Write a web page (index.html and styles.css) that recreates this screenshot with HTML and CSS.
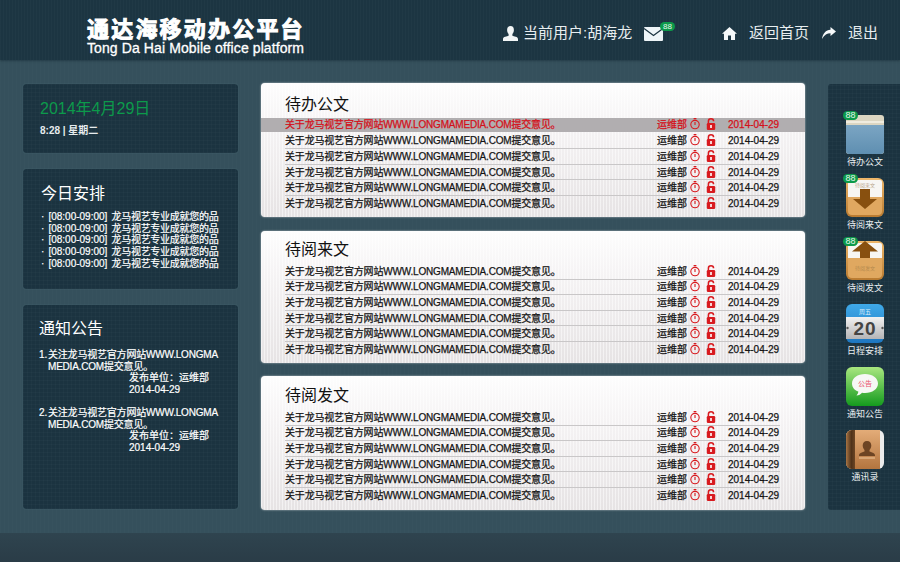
FILE: index.html
```html
<!DOCTYPE html>
<html lang="zh-CN">
<head>
    <meta charset="UTF-8">
    <meta name="viewport" content="width=device-width, initial-scale=1.0">
    <title>通达海移动办公平台</title>
    <link rel="stylesheet" href="styles.css">
</head>
<body>
    <svg class="defs" width="0" height="0">
        <symbol id="clock" viewBox="0 0 10 12">
            <rect x="3.6" y="0" width="2.8" height="1.3" fill="#d81a1f"/>
            <circle cx="5" cy="6.6" r="4.2" fill="none" stroke="#d81a1f" stroke-width="1.1"/>
            <path d="M5 3.9V7" stroke="#d81a1f" stroke-width="1.1"/>
        </symbol>
        <symbol id="lock" viewBox="0 0 10 12">
            <path d="M2.4 5V3.2a2.6 2.4 0 0 1 5.2 0" fill="none" stroke="#d81a1f" stroke-width="1.5"/>
            <rect x="0.8" y="5" width="8.4" height="7" rx="1.2" fill="#d81a1f"/>
            <rect x="4.2" y="7" width="1.6" height="3" fill="#fff"/>
        </symbol>
    </svg>

    <header class="topbar">
        <div class="brand">
            <div class="brand-cn">通达海移动办公平台</div>
            <div class="brand-en">Tong Da Hai Mobile office platform</div>
        </div>
        <div class="user">
            <svg class="top-icon" width="15" height="15" viewBox="0 0 15 15"><path d="M7.5 0c2.300 0 3.400 1.700 3.400 3.900 0 1.600-.7 3.100-1.500 4v1.800c1.500.6 5.600.8 5.600 3.300v2H0v-2c0-2.500 4.100-2.700 5.600-3.300V7.900C4.800 7 4.100 5.500 4.100 3.900 4.100 1.700 5.200 0 7.500 0z" fill="#f2f6f7"/></svg>
            <span>当前用户:胡海龙</span>
        </div>
        <div class="mail">
            <svg width="19" height="14" viewBox="0 0 19 14"><rect width="19" height="14" rx="1" fill="#eef5f8"/><path d="M0 1.500l9.500 7 9.500-7" fill="none" stroke="#1c3441" stroke-width="1.300"/></svg>
            <span class="badge mail-badge">88</span>
        </div>
        <nav class="toplinks">
            <svg class="top-icon" width="15" height="13" viewBox="0 0 15 13"><path d="M7.500 0L15 6.800h-2V13H9V8.500H6V13H2V6.800H0z" fill="#f5f8f9"/></svg>
            <a class="toplink">返回首页</a>
            <svg class="top-icon exit-icon" width="14" height="12" viewBox="0 0 14 12"><path d="M8.500 0L14 4.500 8.500 9V6.300C5 6.300 2.500 8 0 12 .8 6.500 3.800 3 8.500 2.700z" fill="#f5f8f9"/></svg>
            <a class="toplink">退出</a>
        </nav>
    </header>

    <div class="layout">
        <aside class="side">
            <section class="dark-box date-box">
                <div class="date-big">2014年4月29日</div>
                <div class="date-small">8:28 | 星期二</div>
            </section>
            <section class="dark-box plan-box">
                <h2>今日安排</h2>
                <ul class="plan-list">
                    <li>· [08:00-09:00] <span class="plan-text">龙马视艺专业成就您的品</span></li>
                    <li>· [08:00-09:00] <span class="plan-text">龙马视艺专业成就您的品</span></li>
                    <li>· [08:00-09:00] <span class="plan-text">龙马视艺专业成就您的品</span></li>
                    <li>· [08:00-09:00] <span class="plan-text">龙马视艺专业成就您的品</span></li>
                    <li>· [08:00-09:00] <span class="plan-text">龙马视艺专业成就您的品</span></li>
                </ul>
            </section>
            <section class="dark-box notice-box">
                <h2>通知公告</h2>
                <div class="notice">
                    <span class="notice-num">1.</span>
                    <p>关注龙马视艺官方网站WWW.LONGMAMEDIA.COM提交意见。</p>
                    <div class="notice-meta">发布单位：运维部<br>2014-04-29</div>
                </div>
                <div class="notice">
                    <span class="notice-num">2.</span>
                    <p>关注龙马视艺官方网站WWW.LONGMAMEDIA.COM提交意见。</p>
                    <div class="notice-meta">发布单位：运维部<br>2014-04-29</div>
                </div>
            </section>
        </aside>

        <main class="content">
            <section class="doc-panel panel-todo">
                <h2>待办公文</h2>
                <div class="doc-row active"><span class="doc-title">关于龙马视艺官方网站WWW.LONGMAMEDIA.COM提交意见。</span><span class="doc-dept">运维部</span><svg class="i-clock"><use href="#clock"/></svg><svg class="i-lock"><use href="#lock"/></svg><span class="doc-date">2014-04-29</span></div>
                <div class="doc-row"><span class="doc-title">关于龙马视艺官方网站WWW.LONGMAMEDIA.COM提交意见。</span><span class="doc-dept">运维部</span><svg class="i-clock"><use href="#clock"/></svg><svg class="i-lock"><use href="#lock"/></svg><span class="doc-date">2014-04-29</span></div>
                <div class="doc-row"><span class="doc-title">关于龙马视艺官方网站WWW.LONGMAMEDIA.COM提交意见。</span><span class="doc-dept">运维部</span><svg class="i-clock"><use href="#clock"/></svg><svg class="i-lock"><use href="#lock"/></svg><span class="doc-date">2014-04-29</span></div>
                <div class="doc-row"><span class="doc-title">关于龙马视艺官方网站WWW.LONGMAMEDIA.COM提交意见。</span><span class="doc-dept">运维部</span><svg class="i-clock"><use href="#clock"/></svg><svg class="i-lock"><use href="#lock"/></svg><span class="doc-date">2014-04-29</span></div>
                <div class="doc-row"><span class="doc-title">关于龙马视艺官方网站WWW.LONGMAMEDIA.COM提交意见。</span><span class="doc-dept">运维部</span><svg class="i-clock"><use href="#clock"/></svg><svg class="i-lock"><use href="#lock"/></svg><span class="doc-date">2014-04-29</span></div>
                <div class="doc-row"><span class="doc-title">关于龙马视艺官方网站WWW.LONGMAMEDIA.COM提交意见。</span><span class="doc-dept">运维部</span><svg class="i-clock"><use href="#clock"/></svg><svg class="i-lock"><use href="#lock"/></svg><span class="doc-date">2014-04-29</span></div>
            </section>
            <section class="doc-panel panel-in">
                <h2>待阅来文</h2>
                <div class="doc-row"><span class="doc-title">关于龙马视艺官方网站WWW.LONGMAMEDIA.COM提交意见。</span><span class="doc-dept">运维部</span><svg class="i-clock"><use href="#clock"/></svg><svg class="i-lock"><use href="#lock"/></svg><span class="doc-date">2014-04-29</span></div>
                <div class="doc-row"><span class="doc-title">关于龙马视艺官方网站WWW.LONGMAMEDIA.COM提交意见。</span><span class="doc-dept">运维部</span><svg class="i-clock"><use href="#clock"/></svg><svg class="i-lock"><use href="#lock"/></svg><span class="doc-date">2014-04-29</span></div>
                <div class="doc-row"><span class="doc-title">关于龙马视艺官方网站WWW.LONGMAMEDIA.COM提交意见。</span><span class="doc-dept">运维部</span><svg class="i-clock"><use href="#clock"/></svg><svg class="i-lock"><use href="#lock"/></svg><span class="doc-date">2014-04-29</span></div>
                <div class="doc-row"><span class="doc-title">关于龙马视艺官方网站WWW.LONGMAMEDIA.COM提交意见。</span><span class="doc-dept">运维部</span><svg class="i-clock"><use href="#clock"/></svg><svg class="i-lock"><use href="#lock"/></svg><span class="doc-date">2014-04-29</span></div>
                <div class="doc-row"><span class="doc-title">关于龙马视艺官方网站WWW.LONGMAMEDIA.COM提交意见。</span><span class="doc-dept">运维部</span><svg class="i-clock"><use href="#clock"/></svg><svg class="i-lock"><use href="#lock"/></svg><span class="doc-date">2014-04-29</span></div>
                <div class="doc-row"><span class="doc-title">关于龙马视艺官方网站WWW.LONGMAMEDIA.COM提交意见。</span><span class="doc-dept">运维部</span><svg class="i-clock"><use href="#clock"/></svg><svg class="i-lock"><use href="#lock"/></svg><span class="doc-date">2014-04-29</span></div>
            </section>
            <section class="doc-panel panel-out">
                <h2>待阅发文</h2>
                <div class="doc-row"><span class="doc-title">关于龙马视艺官方网站WWW.LONGMAMEDIA.COM提交意见。</span><span class="doc-dept">运维部</span><svg class="i-clock"><use href="#clock"/></svg><svg class="i-lock"><use href="#lock"/></svg><span class="doc-date">2014-04-29</span></div>
                <div class="doc-row"><span class="doc-title">关于龙马视艺官方网站WWW.LONGMAMEDIA.COM提交意见。</span><span class="doc-dept">运维部</span><svg class="i-clock"><use href="#clock"/></svg><svg class="i-lock"><use href="#lock"/></svg><span class="doc-date">2014-04-29</span></div>
                <div class="doc-row"><span class="doc-title">关于龙马视艺官方网站WWW.LONGMAMEDIA.COM提交意见。</span><span class="doc-dept">运维部</span><svg class="i-clock"><use href="#clock"/></svg><svg class="i-lock"><use href="#lock"/></svg><span class="doc-date">2014-04-29</span></div>
                <div class="doc-row"><span class="doc-title">关于龙马视艺官方网站WWW.LONGMAMEDIA.COM提交意见。</span><span class="doc-dept">运维部</span><svg class="i-clock"><use href="#clock"/></svg><svg class="i-lock"><use href="#lock"/></svg><span class="doc-date">2014-04-29</span></div>
                <div class="doc-row"><span class="doc-title">关于龙马视艺官方网站WWW.LONGMAMEDIA.COM提交意见。</span><span class="doc-dept">运维部</span><svg class="i-clock"><use href="#clock"/></svg><svg class="i-lock"><use href="#lock"/></svg><span class="doc-date">2014-04-29</span></div>
                <div class="doc-row"><span class="doc-title">关于龙马视艺官方网站WWW.LONGMAMEDIA.COM提交意见。</span><span class="doc-dept">运维部</span><svg class="i-clock"><use href="#clock"/></svg><svg class="i-lock"><use href="#lock"/></svg><span class="doc-date">2014-04-29</span></div>
            </section>
        </main>

        <aside class="dock">
            <a class="dock-item">
                <span class="badge dock-badge">88</span>
                <svg class="dock-icon" viewBox="0 0 38 39">
                    <defs><linearGradient id="blue" x1="0" y1="0" x2="0" y2="1"><stop offset="0" stop-color="#7ba5c3"/><stop offset="1" stop-color="#5f8fb1"/></linearGradient></defs>
                    <rect width="38" height="39" rx="3" fill="#dcd6c2"/>
                    <rect y="6" width="38" height="2" fill="#f0ecdf"/>
                    <path d="M0 10h38v26a3 3 0 0 1-3 3H3a3 3 0 0 1-3-3z" fill="url(#blue)"/>
                </svg>
                <span class="dock-label">待办公文</span>
            </a>
            <a class="dock-item">
                <span class="badge dock-badge">88</span>
                <svg class="dock-icon" viewBox="0 0 38 39">
                    <defs><linearGradient id="box" x1="0" y1="0" x2="0" y2="1"><stop offset="0" stop-color="#eeb76a"/><stop offset="1" stop-color="#b87a30"/></linearGradient></defs>
                    <rect width="38" height="39" rx="6" fill="url(#box)"/>
                    <rect x="2" y="2" width="34" height="20" rx="2" fill="#f7f6f3"/>
                    <text x="19" y="9" class="tiny-text" fill="#b9a58a">待阅来文</text>
                    <path d="M2 19h34v14a4 4 0 0 1-4 4H6a4 4 0 0 1-4-4z" fill="#e0a860"/>
                    <path d="M14 11h10v10h7L19 31 7 21h7z" fill="#88500f"/>
                </svg>
                <span class="dock-label">待阅来文</span>
            </a>
            <a class="dock-item">
                <span class="badge dock-badge">88</span>
                <svg class="dock-icon" viewBox="0 0 38 39">
                    <rect width="38" height="39" rx="6" fill="url(#box)"/>
                    <rect x="2" y="2" width="34" height="20" rx="2" fill="#f7f6f3"/>
                    <path d="M2 17h34v16a4 4 0 0 1-4 4H6a4 4 0 0 1-4-4z" fill="#e0a860"/>
                    <text x="19" y="29" class="tiny-text" fill="#b58a4e">待阅发文</text>
                    <path d="M19 0l13 10.500h-8V17H14v-6.500H6z" fill="#88500f"/>
                </svg>
                <span class="dock-label">待阅发文</span>
            </a>
            <a class="dock-item">
                <svg class="dock-icon" viewBox="0 0 38 39">
                    <defs>
                        <linearGradient id="cal-top" x1="0" y1="0" x2="0" y2="1"><stop offset="0" stop-color="#3fa9e8"/><stop offset="1" stop-color="#1d76c0"/></linearGradient>
                        <linearGradient id="cal-mid" x1="0" y1="0" x2="0" y2="1"><stop offset="0" stop-color="#f2f2f2"/><stop offset="1" stop-color="#b4b4b6"/></linearGradient>
                    </defs>
                    <rect width="38" height="39" rx="6" fill="url(#cal-top)"/>
                    <rect y="13" width="38" height="22" fill="url(#cal-mid)"/>
                    <circle cx="1.500" cy="24" r="1.200" fill="#555"/>
                    <circle cx="36.500" cy="24" r="1.200" fill="#555"/>
                    <text x="19" y="10" class="cal-week" fill="#d9eefb">周五</text>
                    <text x="19" y="31" class="cal-day" fill="#444">20</text>
                </svg>
                <span class="dock-label">日程安排</span>
            </a>
            <a class="dock-item">
                <svg class="dock-icon" viewBox="0 0 38 39">
                    <defs><linearGradient id="msg" x1="0" y1="0" x2="0" y2="1"><stop offset="0" stop-color="#a9e77f"/><stop offset="1" stop-color="#149a1e"/></linearGradient></defs>
                    <rect width="38" height="39" rx="6" fill="url(#msg)"/>
                    <path d="M19 7c7.500 0 13 3.900 13 9.500S26.500 26 19 26c-1 0-2-.1-3-.3-1.200 1.500-3.200 2.600-5.500 2.800 1-1 1.700-2.300 1.800-3.900C8.500 23.200 6 20.200 6 16.500 6 10.900 11.500 7 19 7z" fill="#f6f8f5"/>
                    <text x="19" y="19" class="msg-text" fill="#ea4d6c">公告</text>
                </svg>
                <span class="dock-label">通知公告</span>
            </a>
            <a class="dock-item">
                <svg class="dock-icon" viewBox="0 0 38 39">
                    <defs>
                        <linearGradient id="book" x1="0" y1="0" x2="0" y2="1"><stop offset="0" stop-color="#e3ac78"/><stop offset="1" stop-color="#b4753f"/></linearGradient>
                        <linearGradient id="spine" x1="0" y1="0" x2="1" y2="0"><stop offset="0" stop-color="#a87444"/><stop offset="0.6" stop-color="#4f3219"/><stop offset="1" stop-color="#6b4524"/></linearGradient>
                    </defs>
                    <rect width="38" height="39" rx="6" fill="#ececec"/>
                    <path d="M6 0h28v39H6a6 6 0 0 1-6-6V6a6 6 0 0 1 6-6z" fill="url(#book)"/>
                    <path d="M6 0h3v39H6a6 6 0 0 1-6-6V6a6 6 0 0 1 6-6z" fill="url(#spine)"/>
                    <path d="M21 11c2.800 0 4.300 2 4.300 4.600 0 1.800-.8 3.400-1.800 4.400v1.500c1.700.8 5.500 1.300 5.500 3.700v.8H13v-.8c0-2.400 3.800-2.900 5.500-3.700V20c-1-1-1.800-2.600-1.800-4.400 0-2.600 1.500-4.600 4.300-4.600z" fill="#6d4423"/>
                    <path d="M13 28h16" stroke="#f0c99d" stroke-width="1"/>
                </svg>
                <span class="dock-label">通讯录</span>
            </a>
        </aside>
    </div>

    <footer class="bottombar"></footer>
</body>
</html>
```

FILE: styles.css
```css
* {
    box-sizing: border-box;
}

body {
    margin: 0;
    width: 900px;
    height: 562px;
    overflow: hidden;
    display: flex;
    flex-direction: column;
    background-color: #35505c;
    font-family: "Liberation Sans", "Noto Sans CJK SC", sans-serif;
    color: #fff;
}

h2 {
    margin: 0;
    font-weight: normal;
    font-size: 16px;
}

.defs {
    position: absolute;
}

/* top bar */
.topbar {
    height: 60px;
    flex: none;
    display: flex;
    align-items: flex-start;
    padding-left: 87px;
    background-color: #1c3542;
    background-image: repeating-linear-gradient(90deg, rgba(255, 255, 255, 0.018) 0 1px, transparent 1px 3px);
    box-shadow: 0 1px 2px rgba(20, 40, 50, 0.5);
}

.brand {
    width: 416px;
    padding-top: 19px;
}

.brand-cn {
    font-size: 22px;
    line-height: 21px;
    font-weight: bold;
    letter-spacing: 2.2px;
    -webkit-text-stroke: 1px #fff;
}

.brand-en {
    margin-top: 1px;
    font-size: 14px;
    line-height: 14px;
    letter-spacing: 0.1px;
    -webkit-text-stroke: 0.3px #fff;
}

.user {
    width: 141px;
    padding-top: 24px;
    display: flex;
    align-items: center;
    gap: 5px;
    font-size: 15px;
    line-height: 18px;
    color: #e8eef0;
}

.mail {
    position: relative;
    padding-top: 27px;
    width: 78px;
}

.mail svg {
    display: block;
}

.mail-badge {
    position: absolute;
    left: 16px;
    top: 22px;
}

.toplinks {
    padding-top: 24px;
    display: flex;
    align-items: center;
    font-size: 15px;
    line-height: 18px;
    color: #e8eef0;
}

.toplink {
    margin-left: 12px;
}

.exit-icon {
    margin-left: 13px;
}

.badge {
    width: 15px;
    height: 9px;
    border-radius: 5px;
    background: #0c9a4a;
    color: #e4f7ea;
    font-size: 8px;
    line-height: 9px;
    text-align: center;
}

/* page body */
.layout {
    flex: 1;
    display: flex;
    padding-top: 23px;
    padding-left: 23px;
    background-image: repeating-linear-gradient(90deg, rgba(255, 255, 255, 0.012) 0 1px, transparent 1px 4px);
}

.side {
    width: 215px;
    margin-right: 23px;
    display: flex;
    flex-direction: column;
    gap: 16px;
    padding-top: 1px;
}

.dark-box {
    border-radius: 3px;
    background-color: #1b3340;
    background-image:
        repeating-linear-gradient(90deg, rgba(255, 255, 255, 0.018) 0 1px, transparent 1px 4px),
        repeating-linear-gradient(0deg, rgba(255, 255, 255, 0.018) 0 1px, transparent 1px 4px);
    box-shadow: 0 0 1px rgba(120, 160, 170, 0.6);
}

.date-box {
    height: 69px;
    padding: 15px 17px 0;
}

.date-big {
    font-size: 16px;
    line-height: 20px;
    color: #0c9a4b;
}

.date-small {
    margin-top: 6px;
    font-size: 10px;
    line-height: 12px;
    font-weight: bold;
    color: #e6ecee;
}

.plan-box {
    height: 120px;
    padding: 11px 18px 0;
}

.plan-list {
    list-style: none;
    margin: 7px 0 0;
    padding: 0;
    font-size: 10px;
    line-height: 11.7px;
    white-space: nowrap;
    word-spacing: 1.3px;
    -webkit-text-stroke: 0.2px #fff;
}

.plan-text {
    letter-spacing: -0.27px;
}

.notice-box {
    flex: none;
    height: 204px;
    padding: 10px 16px 0;
}

.notice {
    position: relative;
    margin-top: 11px;
    padding-left: 9px;
    font-size: 10px;
    line-height: 11.7px;
    -webkit-text-stroke: 0.2px #fff;
}

.notice-box h2 + .notice {
    margin-top: 10px;
}

.notice-num {
    position: absolute;
    left: 0;
    top: 0;
}

.notice p {
    margin: 0;
    width: 176px;
    letter-spacing: -0.2px;
    word-break: break-all;
}

.notice-meta {
    padding-left: 81px;
}

/* middle column */
.content {
    width: 544px;
    margin-right: 23px;
}

.doc-panel {
    border-radius: 4px;
    background-color: #f4f2f3;
    background-image:
        repeating-linear-gradient(90deg, rgba(255, 255, 255, 0.5) 0 1px, transparent 1px 3px),
        linear-gradient(180deg, #fdfdfd 0, #f6f4f5 30%, #e6e3e4 100%);
    box-shadow: 0 0 2px rgba(255, 255, 255, 0.7);
    color: #111;
}

.doc-panel h2 {
    display: flex;
    align-items: center;
    padding: 5px 0 0 24px;
    color: #111;
}

.panel-todo {
    height: 134px;
}

.panel-todo h2 {
    height: 35px;
}

.panel-in {
    height: 132px;
    margin-top: 14px;
}

.panel-in h2 {
    height: 33px;
    padding-top: 1px;
}

.panel-out {
    height: 134px;
    margin-top: 13px;
}

.panel-out h2 {
    height: 34px;
    padding-top: 2px;
}

.doc-row {
    position: relative;
    height: 15.6px;
    display: flex;
    align-items: center;
    padding-left: 24px;
    font-size: 10px;
    line-height: 12px;
    color: #151515;
    -webkit-text-stroke: 0.25px #151515;
}

.doc-row::after {
    content: "";
    position: absolute;
    left: 24px;
    width: 495px;
    bottom: 0;
    border-bottom: 1px solid #c9c7c8;
}

.doc-row:last-child::after {
    display: none;
}

.doc-row.active {
    background: #b1aeb0;
    height: 14px;
    margin-bottom: 1.6px;
    color: #d4101a;
    -webkit-text-stroke: 0.25px #d4101a;
}

.doc-row.active::after {
    display: none;
}

.doc-title {
    width: 372px;
    white-space: nowrap;
    letter-spacing: -0.18px;
}

.doc-dept {
    width: 33px;
}

.i-clock {
    width: 10px;
    height: 12px;
    margin-right: 6px;
    margin-bottom: 2px;
}

.i-lock {
    width: 10px;
    height: 12px;
    margin-right: 12px;
    margin-bottom: 2px;
}

/* right dock */
.dock {
    width: 72px;
    height: 426px;
    margin-top: 1px;
    padding-top: 31px;
    border-radius: 3px 0 0 3px;
    background-color: #1b3340;
    background-image:
        repeating-linear-gradient(90deg, rgba(255, 255, 255, 0.018) 0 1px, transparent 1px 4px),
        repeating-linear-gradient(0deg, rgba(255, 255, 255, 0.018) 0 1px, transparent 1px 4px);
}

.dock-item {
    position: relative;
    height: 63px;
    display: flex;
    flex-direction: column;
    align-items: center;
    padding-left: 2px;
}

.dock-icon {
    width: 38px;
    height: 39px;
    flex: none;
}

.dock-label {
    margin-top: 2px;
    font-size: 9px;
    line-height: 12px;
    color: #e9eef0;
}

.dock-badge {
    position: absolute;
    left: 15px;
    top: -4px;
    font-size: 9px;
}

.tiny-text {
    font-size: 5px;
    text-anchor: middle;
}

.cal-week {
    font-size: 6px;
    text-anchor: middle;
}

.cal-day {
    font-size: 19px;
    font-weight: bold;
    letter-spacing: 1px;
    text-anchor: middle;
}

.msg-text {
    font-size: 7px;
    text-anchor: middle;
}

.bottombar {
    height: 29px;
    flex: none;
    background: linear-gradient(180deg, #2f444f, #2a3c47);
}
```
